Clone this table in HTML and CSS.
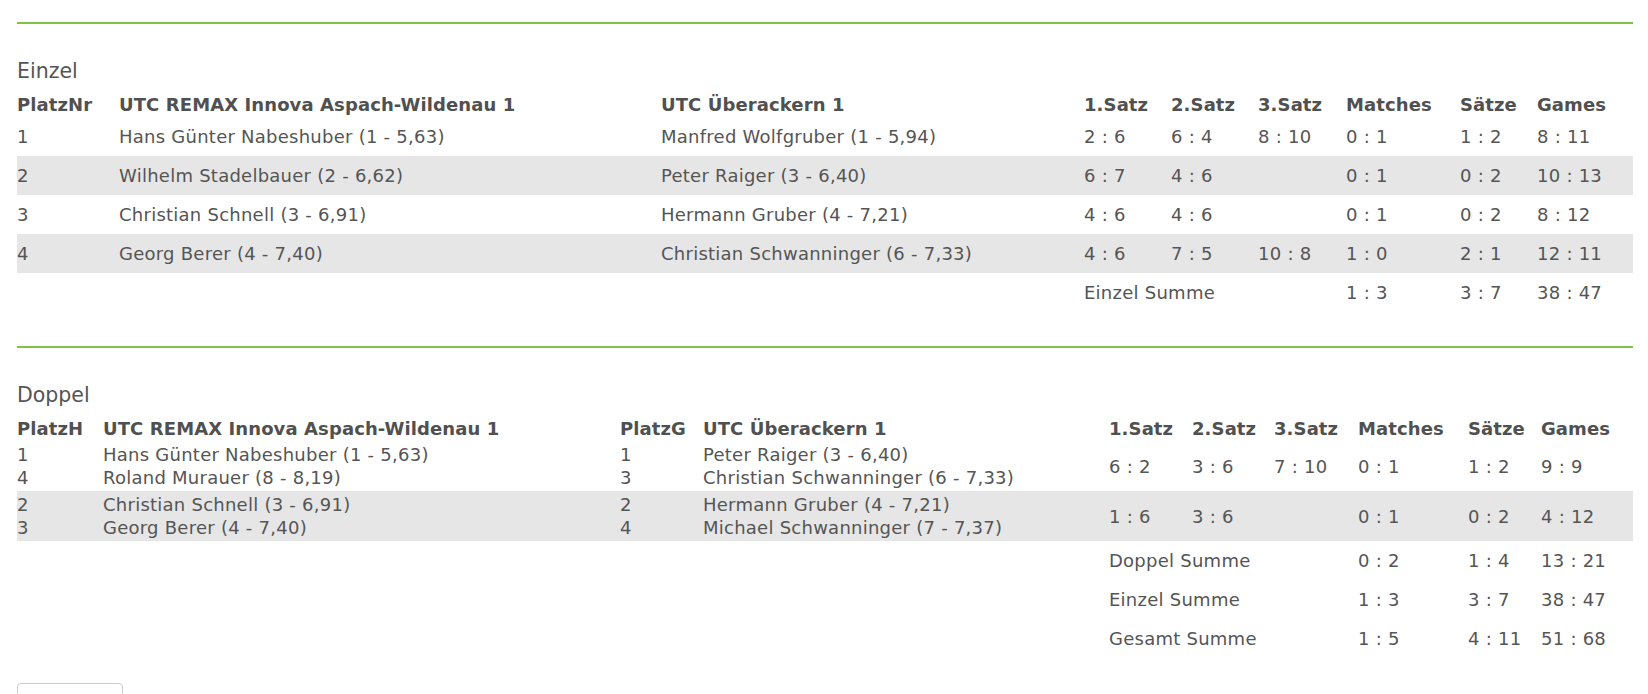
FILE: index.html
```html
<!DOCTYPE html>
<html lang="de">
<head>
<meta charset="utf-8">
<title>Spielbericht</title>
<link rel="stylesheet" href="styles.css">
</head>
<body>
<div class="page">
  <div class="sep"></div>
  <div class="title">Einzel</div>
  <table class="res einzel">
    <colgroup>
      <col class="e1"><col class="e2"><col class="e3"><col class="e4"><col class="e5"><col class="e6"><col class="e7"><col class="e8"><col class="e9">
    </colgroup>
    <thead>
      <tr><th>PlatzNr</th><th>UTC REMAX Innova Aspach-Wildenau 1</th><th>UTC Überackern 1</th><th>1.Satz</th><th>2.Satz</th><th>3.Satz</th><th>Matches</th><th>Sätze</th><th>Games</th></tr>
    </thead>
    <tbody>
      <tr><td>1</td><td>Hans Günter Nabeshuber (1 - 5,63)</td><td>Manfred Wolfgruber (1 - 5,94)</td><td>2 : 6</td><td>6 : 4</td><td>8 : 10</td><td>0 : 1</td><td>1 : 2</td><td>8 : 11</td></tr>
      <tr class="alt"><td>2</td><td>Wilhelm Stadelbauer (2 - 6,62)</td><td>Peter Raiger (3 - 6,40)</td><td>6 : 7</td><td>4 : 6</td><td></td><td>0 : 1</td><td>0 : 2</td><td>10 : 13</td></tr>
      <tr><td>3</td><td>Christian Schnell (3 - 6,91)</td><td>Hermann Gruber (4 - 7,21)</td><td>4 : 6</td><td>4 : 6</td><td></td><td>0 : 1</td><td>0 : 2</td><td>8 : 12</td></tr>
      <tr class="alt"><td>4</td><td>Georg Berer (4 - 7,40)</td><td>Christian Schwanninger (6 - 7,33)</td><td>4 : 6</td><td>7 : 5</td><td>10 : 8</td><td>1 : 0</td><td>2 : 1</td><td>12 : 11</td></tr>
      <tr><td></td><td></td><td></td><td colspan="3">Einzel Summe</td><td>1 : 3</td><td>3 : 7</td><td>38 : 47</td></tr>
    </tbody>
  </table>

  <div class="sep"></div>
  <div class="title">Doppel</div>
  <table class="res doppel">
    <colgroup>
      <col class="d1"><col class="d2"><col class="d3"><col class="d4"><col class="d5"><col class="d6"><col class="d7"><col class="d8"><col class="d9"><col class="d10">
    </colgroup>
    <thead>
      <tr><th>PlatzH</th><th>UTC REMAX Innova Aspach-Wildenau 1</th><th>PlatzG</th><th>UTC Überackern 1</th><th>1.Satz</th><th>2.Satz</th><th>3.Satz</th><th>Matches</th><th>Sätze</th><th>Games</th></tr>
    </thead>
    <tbody>
      <tr class="pair"><td>1<br>4</td><td>Hans Günter Nabeshuber (1 - 5,63)<br>Roland Murauer (8 - 8,19)</td><td>1<br>3</td><td>Peter Raiger (3 - 6,40)<br>Christian Schwanninger (6 - 7,33)</td><td>6 : 2</td><td>3 : 6</td><td>7 : 10</td><td>0 : 1</td><td>1 : 2</td><td>9 : 9</td></tr>
      <tr class="pair alt"><td>2<br>3</td><td>Christian Schnell (3 - 6,91)<br>Georg Berer (4 - 7,40)</td><td>2<br>4</td><td>Hermann Gruber (4 - 7,21)<br>Michael Schwanninger (7 - 7,37)</td><td>1 : 6</td><td>3 : 6</td><td></td><td>0 : 1</td><td>0 : 2</td><td>4 : 12</td></tr>
      <tr><td></td><td></td><td></td><td></td><td colspan="3">Doppel Summe</td><td>0 : 2</td><td>1 : 4</td><td>13 : 21</td></tr>
      <tr><td></td><td></td><td></td><td></td><td colspan="3">Einzel Summe</td><td>1 : 3</td><td>3 : 7</td><td>38 : 47</td></tr>
      <tr><td></td><td></td><td></td><td></td><td colspan="3">Gesamt Summe</td><td>1 : 5</td><td>4 : 11</td><td>51 : 68</td></tr>
    </tbody>
  </table>

  <div class="actions">
    <button class="btn" type="button" aria-label="Zurück"></button>
  </div>
</div>
</body>
</html>
```

FILE: styles.css
```css
html, body {
  margin: 0;
  padding: 0;
  background: #ffffff;
}

body {
  font-family: "DejaVu Sans", Verdana, sans-serif;
  font-size: 18px;
  color: #555555;
}

.page {
  width: 1616px;
  margin-left: 17px;
}

.sep {
  height: 2px;
  background: #7fc244;
}

.page > .sep:first-child {
  margin-top: 22px;
}

.title {
  margin: 34px 0 8px;
  font-size: 20.5px;
  line-height: 27px;
}

.res {
  width: 1616px;
  table-layout: fixed;
  border-collapse: collapse;
  border-spacing: 0;
  margin-bottom: 34px;
}

.res th {
  height: 24px;
  padding: 0;
  line-height: 24px;
  text-align: left;
  font-weight: bold;
  letter-spacing: 0.1px;
  white-space: nowrap;
  color: #505050;
}

.res td {
  padding: 8px 0;
  line-height: 23px;
  text-align: left;
  vertical-align: middle;
  letter-spacing: 0.25px;
  white-space: nowrap;
}

.res tr.alt td {
  background: #e6e6e6;
}

.res tr.pair td {
  padding: 2px 0;
}

/* Einzel columns */
.e1 { width: 102px; }
.e2 { width: 542px; }
.e3 { width: 423px; }
.e4 { width: 87px; }
.e5 { width: 87px; }
.e6 { width: 88px; }
.e7 { width: 114px; }
.e8 { width: 77px; }
.e9 { width: 96px; }

/* Doppel columns */
.d1 { width: 86px; }
.d2 { width: 517px; }
.d3 { width: 83px; }
.d4 { width: 406px; }
.d5 { width: 83px; }
.d6 { width: 82px; }
.d7 { width: 84px; }
.d8 { width: 110px; }
.d9 { width: 73px; }
.d10 { width: 92px; }

.doppel {
  margin-bottom: 25px;
}

.actions {
  display: flex;
}

.btn {
  width: 106px;
  height: 40px;
  padding: 0;
  border: 1px solid #cccccc;
  border-radius: 4px;
  background: #ffffff;
}
```
